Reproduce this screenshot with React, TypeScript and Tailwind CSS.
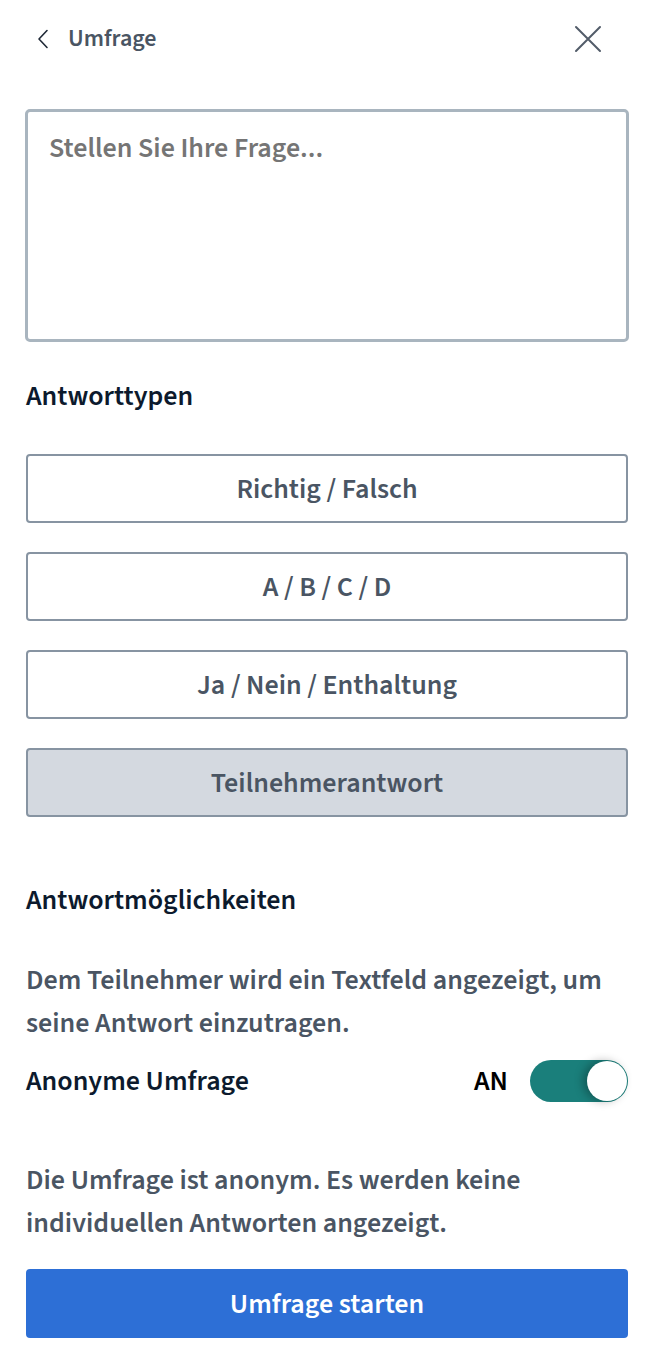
import React from "react";

const font = { fontFamily: '"Source Sans Pro", "Source Sans 3", Lato, "Liberation Sans", sans-serif' };

function OptionButton({ label, active = false }: { label: string; active?: boolean }) {
  return (
    <button
      className={
        "h-[69px] w-full rounded-[4px] border-2 border-[#8794a2] text-[28px] font-semibold text-[#4a5563] " +
        (active ? "bg-[#d4d9e0]" : "bg-white")
      }
    >
      {label}
    </button>
  );
}

export default function App() {
  return (
    <div className="w-[650px] bg-white pl-[26px] pr-[22px] pb-[28px]" style={font}>
      <div className="flex h-[77px] items-center justify-between">
        <div className="flex items-center">
          <svg width="12" height="20" viewBox="0 0 12 20" className="ml-[11px]" fill="none">
            <path d="M10 1.5 L2 10 L10 18.5" stroke="#1f2937" strokeWidth="1.6" strokeLinecap="round" strokeLinejoin="round" />
          </svg>
          <span className="ml-[19px] text-[24px] font-semibold text-[#4a5563]">Umfrage</span>
        </div>
        <svg width="28" height="28" viewBox="0 0 28 28" className="mr-[26px]" fill="none">
          <path d="M2 2 L26 26 M26 2 L2 26" stroke="#525c69" strokeWidth="2" strokeLinecap="round" />
        </svg>
      </div>

      <div className="-mx-[1px] mt-[32px] h-[233px] rounded-[5px] border-[3px] border-[#a9b5bf] px-[21px] pt-[18px]">
        <span className="text-[28px] font-semibold leading-[36px] text-[#757575]">Stellen Sie Ihre Frage...</span>
      </div>

      <div className="mt-[37px] text-[28px] font-semibold leading-[34px] text-[#0c1a2d]">Antworttypen</div>

      <div className="mt-[41px] flex flex-col gap-[29px]">
        <OptionButton label="Richtig / Falsch" />
        <OptionButton label="A / B / C / D" />
        <OptionButton label="Ja / Nein / Enthaltung" />
        <OptionButton label="Teilnehmerantwort" active />
      </div>

      <div className="mt-[66px] text-[28px] font-semibold leading-[34px] text-[#0c1a2d]">Antwortmöglichkeiten</div>

      <p className="mt-[42px] text-[28px] font-semibold leading-[43px] text-[#4a5563]">
        Dem Teilnehmer wird ein Textfeld angezeigt, um seine Antwort einzutragen.
      </p>

      <div className="mt-[15px] flex h-[42px] items-center justify-between">
        <span className="text-[28px] font-semibold text-[#0c1a2d]">Anonyme Umfrage</span>
        <div className="flex items-center">
          <span className="mr-[22px] text-[28px] font-semibold text-black">AN</span>
          <div className="relative h-[42px] w-[98px] rounded-full bg-[#1a7f7b]">
            <div className="absolute right-[1px] top-[1px] h-[40px] w-[40px] rounded-full bg-white shadow-[-4px_0_10px_rgba(0,0,0,0.3)]" />
          </div>
        </div>
      </div>

      <p className="mt-[57px] text-[28px] font-semibold leading-[43px] text-[#4a5563]">
        Die Umfrage ist anonym. Es werden keine individuellen Antworten angezeigt.
      </p>

      <button className="mt-[24px] h-[69px] w-full rounded-[4px] bg-[#2d6fd6] text-[28px] font-semibold text-white">
        Umfrage starten
      </button>
    </div>
  );
}
